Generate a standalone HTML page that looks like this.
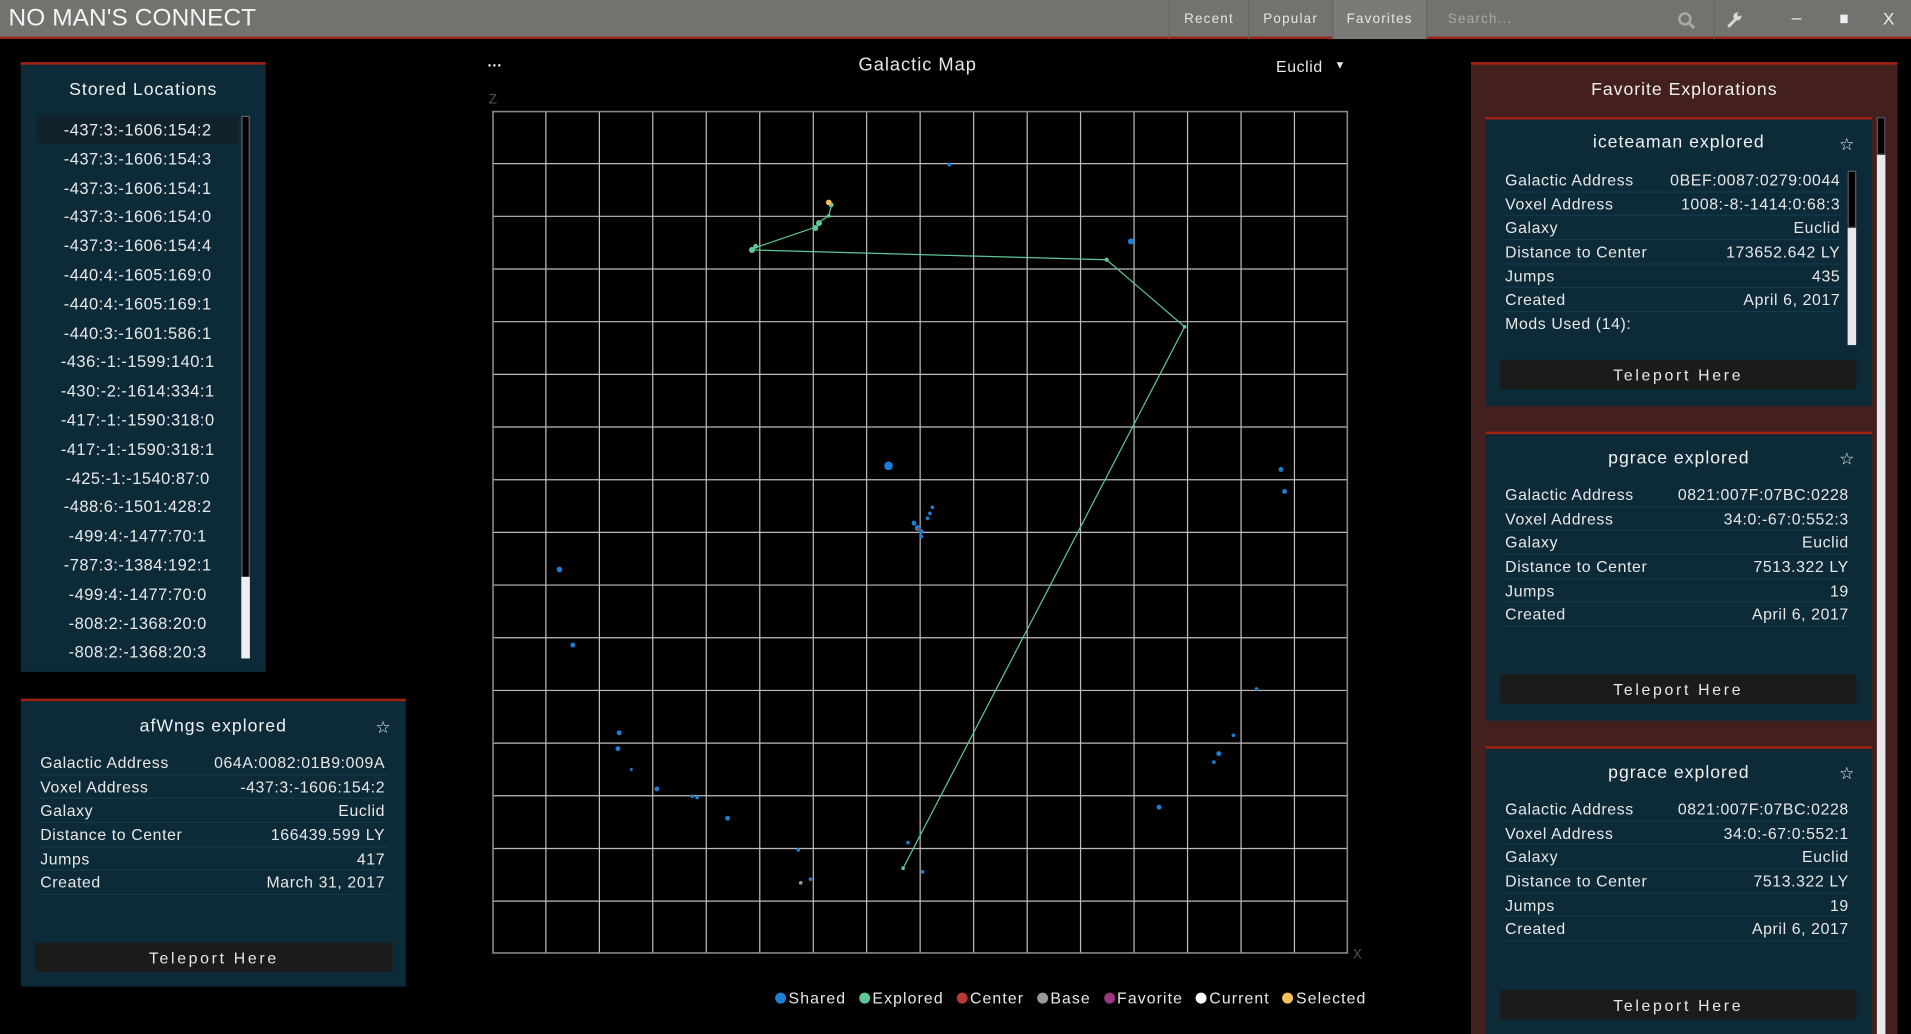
<!DOCTYPE html>
<html><head><meta charset="utf-8">
<style>
*{margin:0;padding:0;box-sizing:border-box}
html,body{width:1911px;height:1034px;overflow:hidden;background:#000}
#w{position:absolute;left:0;top:0;width:1568px;height:848px;transform:scale(1.21875,1.2194);transform-origin:0 0;font-family:"Liberation Sans",sans-serif;color:#e8e8e8}
.a{position:absolute}
#top{left:0;top:0;width:1568px;height:32px;background:#72736f;border-bottom:2px solid #9c2414}
.nav{top:0;height:32px;line-height:33px;font-size:11px;letter-spacing:1px;color:#e6e6e6;text-align:center;border-left:1px solid #666762}
.panel{background:#0d2a38;border-top:2px solid #a5210f}
.title{font-size:14.5px;letter-spacing:.8px;text-align:center;color:#f0f0f0}
.li{left:30px;width:166px;height:23.8px;line-height:25px;text-align:center;font-size:13.5px;letter-spacing:.4px}
.row{height:19.7px;line-height:20px;font-size:13px;letter-spacing:.5px;border-bottom:1px solid #15384a;display:flex;justify-content:space-between;padding:0 2px}
.btn{background:#1b1b19;height:24px;line-height:25px;text-align:center;font-size:13px;letter-spacing:2.2px}
.star{font-size:14px;color:#eee}
.leg{font-size:13px;letter-spacing:.9px}
.dot{display:inline-block;width:9px;height:9px;border-radius:50%;margin:0 2px 0 6px;vertical-align:0}
</style></head><body><div id="w">
<div id="top" class="a"></div>
<div class="a" style="left:7px;top:4px;font-size:20px;letter-spacing:.1px;color:#f4f4f4">NO MAN'S CONNECT</div>
<div class="a nav" style="left:959px;width:65px">Recent</div>
<div class="a nav" style="left:1024px;width:69px">Popular</div>
<div class="a nav" style="left:1093px;width:77px;background:#7a7b77">Favorites</div>
<div class="a nav" style="left:1170px;width:236px;text-align:left;padding-left:17px;color:#a9aaa6">Search...</div>
<div class="a nav" style="left:1406px;width:1px"></div>
<svg class="a" style="left:1376px;top:9px" width="16" height="16" viewBox="0 0 16 16"><circle cx="6.5" cy="6.5" r="4.5" fill="none" stroke="#a9aaa6" stroke-width="2"/><path d="M10 10l4 4" stroke="#a9aaa6" stroke-width="2.5"/></svg>
<svg class="a" style="left:1416px;top:9px" width="14" height="14" viewBox="0 0 14 14"><path d="M2 13L8 7" stroke="#d8d8d8" stroke-width="2.4"/><circle cx="9.5" cy="4.5" r="3.3" fill="#d8d8d8"/><circle cx="11" cy="3" r="1.4" fill="#72736f"/></svg>
<div class="a" style="left:1470px;top:15px;width:8px;height:1px;background:#eee"></div>
<div class="a" style="left:1510px;top:12px;width:6px;height:7px;background:#eee"></div>
<div class="a" style="left:1545px;top:7px;font-size:14px;color:#eee">X</div>

<div class="a panel" style="left:17px;top:51px;width:201px;height:500px"></div>
<div class="a title" style="left:17px;top:66px;width:201px">Stored Locations</div>
<div class="a" style="left:30px;top:94px;width:166px;height:24px;background:#10232c"></div>
<div class="a" style="left:198px;top:95px;width:7px;height:445px;border:1px solid #666;background:#000"></div>
<div class="a" style="left:198px;top:473px;width:7px;height:67px;background:#f0f0f0"></div>
<div class="a li" style="top:94px">-437:3:-1606:154:2</div>
<div class="a li" style="top:117.8px">-437:3:-1606:154:3</div>
<div class="a li" style="top:141.6px">-437:3:-1606:154:1</div>
<div class="a li" style="top:165.4px">-437:3:-1606:154:0</div>
<div class="a li" style="top:189.2px">-437:3:-1606:154:4</div>
<div class="a li" style="top:213px">-440:4:-1605:169:0</div>
<div class="a li" style="top:236.8px">-440:4:-1605:169:1</div>
<div class="a li" style="top:260.6px">-440:3:-1601:586:1</div>
<div class="a li" style="top:284.4px">-436:-1:-1599:140:1</div>
<div class="a li" style="top:308.2px">-430:-2:-1614:334:1</div>
<div class="a li" style="top:332px">-417:-1:-1590:318:0</div>
<div class="a li" style="top:355.8px">-417:-1:-1590:318:1</div>
<div class="a li" style="top:379.6px">-425:-1:-1540:87:0</div>
<div class="a li" style="top:403.4px">-488:6:-1501:428:2</div>
<div class="a li" style="top:427.2px">-499:4:-1477:70:1</div>
<div class="a li" style="top:451px">-787:3:-1384:192:1</div>
<div class="a li" style="top:474.8px">-499:4:-1477:70:0</div>
<div class="a li" style="top:498.6px">-808:2:-1368:20:0</div>
<div class="a li" style="top:522.4px">-808:2:-1368:20:3</div>

<div class="a panel" style="left:17px;top:573px;width:316px;height:236px"></div>
<div class="a title" style="left:17px;top:588px;width:316px">afWngs explored</div>
<div class="a star" style="left:308px;top:588px">☆</div>
<div class="a" style="left:31px;top:616px;width:287px">
<div class="row"><span>Galactic Address</span><span>064A:0082:01B9:009A</span></div>
<div class="row"><span>Voxel Address</span><span>-437:3:-1606:154:2</span></div>
<div class="row"><span>Galaxy</span><span>Euclid</span></div>
<div class="row"><span>Distance to Center</span><span>166439.599 LY</span></div>
<div class="row"><span>Jumps</span><span>417</span></div>
<div class="row"><span>Created</span><span>March 31, 2017</span></div>
</div>
<div class="a btn" style="left:29px;top:773px;width:293px">Teleport Here</div>

<div class="a" style="left:400px;top:47px;font-size:12px;font-weight:bold;color:#fff">···</div>
<div class="a" style="left:653px;top:45px;width:200px;text-align:center;font-size:15px;letter-spacing:.8px">Galactic Map</div>
<div class="a" style="left:1047px;top:47px;font-size:13px;letter-spacing:.5px">Euclid</div>
<div class="a" style="left:1095px;top:48px;font-size:9px">▼</div>
<div class="a" style="left:401px;top:76px;font-size:11px;color:#555">Z</div>
<div class="a" style="left:1110px;top:777px;font-size:11px;color:#555">X</div>

<svg class="a" style="left:0;top:0" width="1568" height="848">
<g stroke="#bdbdbd" stroke-width="1">
<path d="M447.9 91V782M491.8 91V782M535.6 91V782M579.5 91V782M623.4 91V782M667.3 91V782M711.1 91V782M755 91V782M798.9 91V782M842.8 91V782M886.6 91V782M930.5 91V782M974.4 91V782M1018.3 91V782M1062.1 91V782"/>
<path d="M404 134.2H1106M404 177.4H1106M404 220.6H1106M404 263.8H1106M404 307H1106M404 350.2H1106M404 393.4H1106M404 436.6H1106M404 479.8H1106M404 523H1106M404 566.2H1106M404 609.4H1106M404 652.6H1106M404 695.8H1106M404 739H1106"/>
</g>
<rect x="404.5" y="91.5" width="701" height="690" fill="none" stroke="#888" stroke-width="1.3"/>
<g stroke="#5ec795" stroke-width="1" fill="none">
<path d="M617 205L620 203L670 186L672 182L680 177L682 169M617 205L908 213L972 268L741 712"/>
</g>
<g fill="#5ec795"><circle cx="617" cy="205" r="2.5"/><circle cx="620" cy="202" r="2"/><circle cx="669" cy="187" r="2.5"/><circle cx="672" cy="183" r="2.5"/><circle cx="680" cy="177" r="1.5"/><circle cx="682" cy="168" r="2"/><circle cx="908" cy="213" r="1.7"/><circle cx="972" cy="268" r="1.5"/><circle cx="741" cy="712" r="1.5"/></g>
<circle cx="680" cy="166" r="2.3" fill="#f4c05a"/>
<g fill="#1b7fd6">
<circle cx="779" cy="135" r="1.5"/><circle cx="928" cy="198" r="2.5"/><circle cx="729" cy="382" r="3.5"/><circle cx="1051" cy="385" r="2"/><circle cx="1054" cy="403" r="2"/><circle cx="765" cy="416" r="1.5"/><circle cx="763" cy="421" r="1.5"/><circle cx="761" cy="425" r="1.5"/><circle cx="750" cy="429" r="2"/><circle cx="753" cy="433" r="2.5"/><circle cx="756" cy="436" r="2"/><circle cx="756" cy="440" r="1.5"/><circle cx="459" cy="467" r="2.3"/><circle cx="470" cy="529" r="2"/><circle cx="1031" cy="565" r="1.5"/><circle cx="508" cy="601" r="2"/><circle cx="507" cy="614" r="2"/><circle cx="1012" cy="603" r="1.5"/><circle cx="1000" cy="618" r="2"/><circle cx="996" cy="625" r="1.5"/><circle cx="518" cy="631" r="1.2"/><circle cx="539" cy="647" r="2"/><circle cx="568" cy="653" r="1.5"/><circle cx="572" cy="654" r="1.5"/><circle cx="597" cy="671" r="2"/><circle cx="951" cy="662" r="2"/><circle cx="745" cy="691" r="1.5"/><circle cx="655" cy="697" r="1.5"/><circle cx="757" cy="715" r="1.5"/><circle cx="665" cy="721" r="1.5"/>
</g>
<circle cx="754" cy="434" r="1.2" fill="#b83a30"/>
<circle cx="657" cy="724" r="1.5" fill="#999"/>
</svg>

<div class="a leg" style="left:630px;top:811px;white-space:nowrap"><span class="dot" style="background:#1b7fd6;margin-left:6px"></span>Shared <span class="dot" style="background:#5ec795"></span>Explored <span class="dot" style="background:#b83a30"></span>Center <span class="dot" style="background:#999"></span>Base <span class="dot" style="background:#9c3580"></span>Favorite <span class="dot" style="background:#fff"></span>Current <span class="dot" style="background:#f4c05a"></span>Selected</div>

<div class="a" style="left:1207px;top:51px;width:350px;height:797px;background:#43201e;border-top:2px solid #a5210f"></div>
<div class="a title" style="left:1207px;top:66px;width:350px">Favorite Explorations</div>
<div class="a" style="left:1540px;top:96px;width:7px;height:752px;background:#e8e8e8"></div>
<div class="a" style="left:1540px;top:96px;width:7px;height:31px;background:#000;border:1px solid #555"></div>

<div class="a panel" style="left:1219px;top:96px;width:317px;height:237px"></div>
<div class="a title" style="left:1219px;top:109px;width:317px">iceteaman explored</div>
<div class="a star" style="left:1509px;top:110px">☆</div>
<div class="a" style="left:1516px;top:140px;width:7px;height:143px;background:#e8e8e8"></div>
<div class="a" style="left:1516px;top:140px;width:7px;height:47px;background:#000;border:1px solid #555"></div>
<div class="a" style="left:1233px;top:138px;width:279px">
<div class="row"><span>Galactic Address</span><span>0BEF:0087:0279:0044</span></div>
<div class="row"><span>Voxel Address</span><span>1008:-8:-1414:0:68:3</span></div>
<div class="row"><span>Galaxy</span><span>Euclid</span></div>
<div class="row"><span>Distance to Center</span><span>173652.642 LY</span></div>
<div class="row"><span>Jumps</span><span>435</span></div>
<div class="row"><span>Created</span><span>April 6, 2017</span></div>
<div class="row" style="border:none"><span>Mods Used (14):</span><span></span></div>
</div>
<div class="a btn" style="left:1231px;top:295px;width:292px">Teleport Here</div>

<div class="a panel" style="left:1219px;top:354px;width:317px;height:237px"></div>
<div class="a title" style="left:1219px;top:368px;width:317px">pgrace explored</div>
<div class="a star" style="left:1509px;top:368px">☆</div>
<div class="a" style="left:1233px;top:396px;width:286px">
<div class="row"><span>Galactic Address</span><span>0821:007F:07BC:0228</span></div>
<div class="row"><span>Voxel Address</span><span>34:0:-67:0:552:3</span></div>
<div class="row"><span>Galaxy</span><span>Euclid</span></div>
<div class="row"><span>Distance to Center</span><span>7513.322 LY</span></div>
<div class="row"><span>Jumps</span><span>19</span></div>
<div class="row"><span>Created</span><span>April 6, 2017</span></div>
</div>
<div class="a btn" style="left:1231px;top:553px;width:292px">Teleport Here</div>

<div class="a panel" style="left:1219px;top:612px;width:317px;height:236px"></div>
<div class="a title" style="left:1219px;top:626px;width:317px">pgrace explored</div>
<div class="a star" style="left:1509px;top:626px">☆</div>
<div class="a" style="left:1233px;top:654px;width:286px">
<div class="row"><span>Galactic Address</span><span>0821:007F:07BC:0228</span></div>
<div class="row"><span>Voxel Address</span><span>34:0:-67:0:552:1</span></div>
<div class="row"><span>Galaxy</span><span>Euclid</span></div>
<div class="row"><span>Distance to Center</span><span>7513.322 LY</span></div>
<div class="row"><span>Jumps</span><span>19</span></div>
<div class="row"><span>Created</span><span>April 6, 2017</span></div>
</div>
<div class="a btn" style="left:1231px;top:812px;width:292px">Teleport Here</div>
</div></body></html>
